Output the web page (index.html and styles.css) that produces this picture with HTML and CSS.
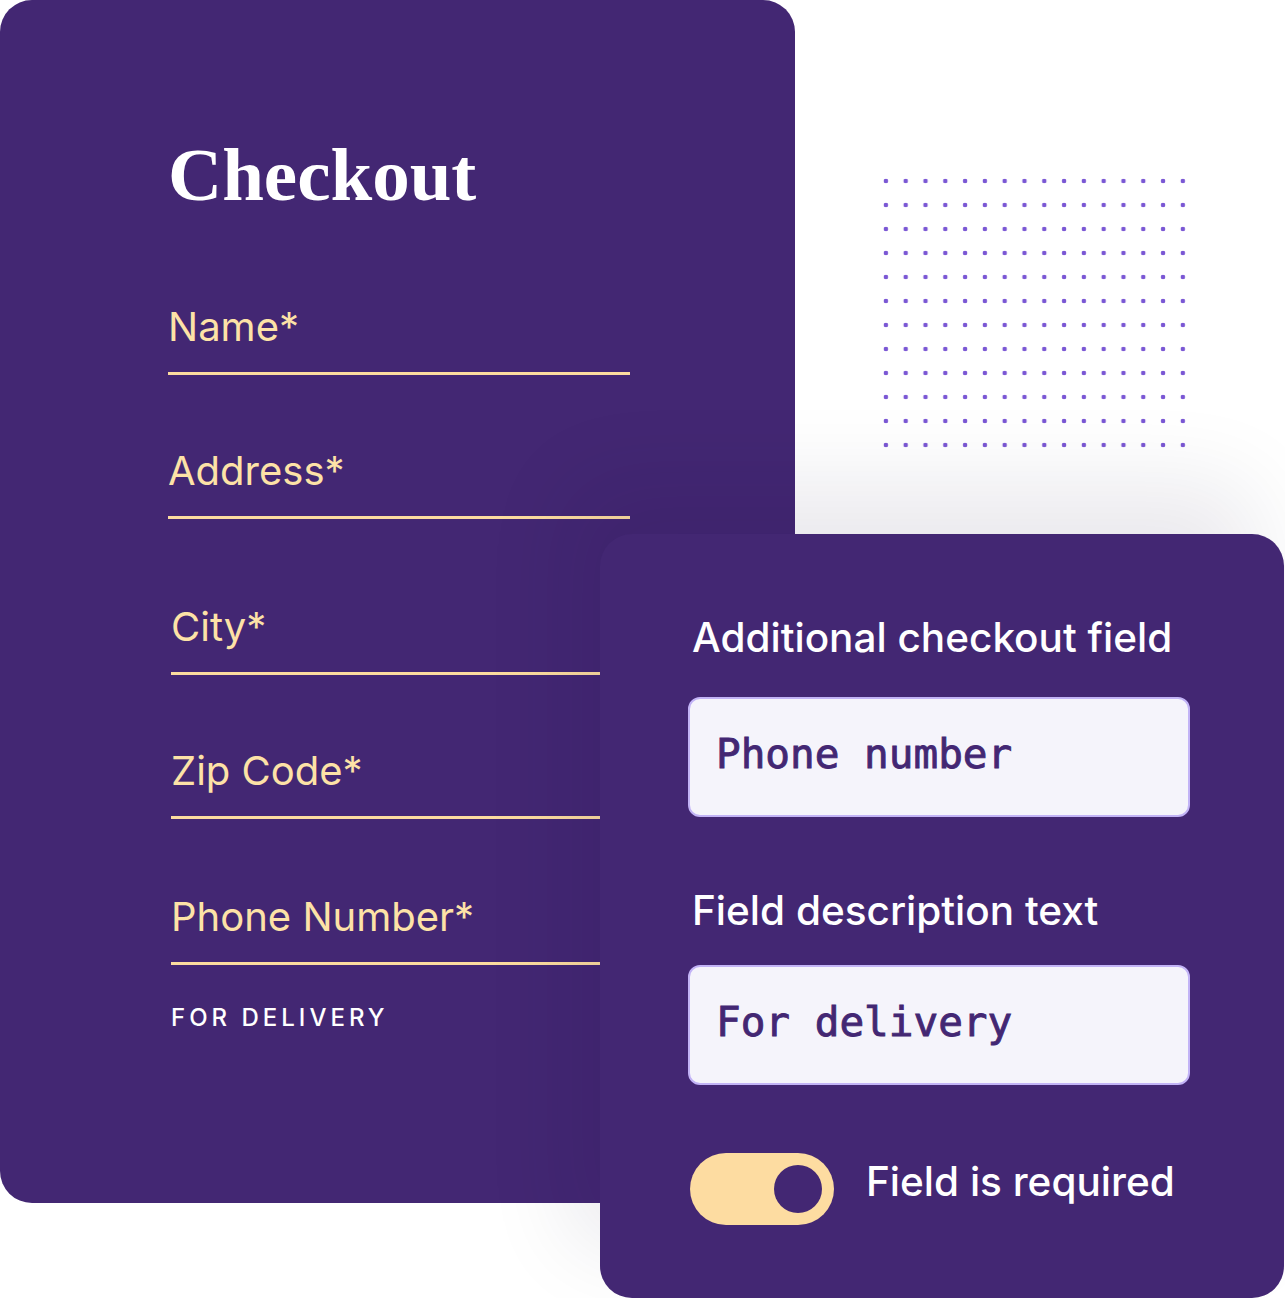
FILE: index.html
```html
<!DOCTYPE html>
<html lang="en">
<head>
    <meta charset="UTF-8">
    <meta name="viewport" content="width=device-width, initial-scale=1.0">
    <title>Checkout Fields</title>
    <link rel="stylesheet" href="styles.css">
</head>
<body>
    <div class="stage">
        <section class="checkout">
            <h1 class="checkout-title">Checkout</h1>

            <div class="field-group">
                <div class="field"><span class="field-label">Name*</span></div>
                <div class="field"><span class="field-label">Address*</span></div>
            </div>

            <div class="field-group field-group--lower">
                <div class="field"><span class="field-label">City*</span></div>
                <div class="field"><span class="field-label">Zip Code*</span></div>
                <div class="field field--phone"><span class="field-label">Phone Number*</span></div>
                <p class="field-hint">For delivery</p>
            </div>
        </section>

        <div class="dots"></div>

        <section class="editor">
            <h2 class="editor-label">Additional checkout field</h2>
            <div class="editor-input">Phone number</div>

            <h2 class="editor-label editor-label--desc">Field description text</h2>
            <div class="editor-input">For delivery</div>

            <div class="toggle-row">
                <span class="toggle"><span class="toggle-knob"></span></span>
                <span class="toggle-text">Field is required</span>
            </div>
        </section>
    </div>
</body>
</html>
```

FILE: styles.css
```css
body {
    margin: 0;
    background: #ffffff;
    font-family: Inter, "Noto Sans", sans-serif;
}
.stage {
    position: relative;
    width: 1285px;
    height: 1298px;
    overflow: hidden;
}

/* left card: the checkout form preview */
.checkout {
    width: 795px;
    height: 1203px;
    box-sizing: border-box;
    padding: 137px 0 0 168px;
    background: #432773;
    border-radius: 32px;
}
.checkout-title {
    margin: 0 0 91px 0;
    font-family: "Liberation Serif", "DejaVu Serif", serif;
    font-size: 75px;
    font-weight: bold;
    line-height: 1;
    color: #ffffff;
}
.field-group {
    display: flex;
    flex-direction: column;
    gap: 72px;
}
.field-group--lower {
    margin: 84px 0 0 3px;
}
.field {
    width: 462px;
    padding-bottom: 21px;
    border-bottom: 3px solid #fcdc9f;
}
.field--phone {
    margin-top: 2px;
}
.field-label {
    display: block;
    font-size: 40px;
    line-height: 48px;
    font-weight: 400;
    color: #fde2a7;
}
.field-hint {
    margin: -33px 0 0 0;
    font-size: 24px;
    line-height: 28px;
    font-weight: 500;
    letter-spacing: 4px;
    text-transform: uppercase;
    color: #ffffff;
}

/* dotted decoration behind the cards */
.dots {
    position: absolute;
    left: 876px;
    top: 169px;
    width: 317px;
    height: 288px;
    background-image: radial-gradient(circle, #7a57d4 2px, transparent 2.6px);
    background-size: 19.8px 24px;
}

/* right card: field settings, sits over the form */
.editor {
    position: absolute;
    left: 600px;
    top: 534px;
    width: 684px;
    height: 764px;
    box-sizing: border-box;
    padding: 80px 0 0 88px;
    background: #432773;
    border-radius: 32px;
    box-shadow: -30px -50px 90px rgba(25, 12, 60, 0.09);
}
.editor-label {
    margin: 0 0 35px 4px;
    font-size: 40.5px;
    line-height: 48px;
    font-weight: 500;
    color: #ffffff;
}
.editor-label--desc {
    margin: 70px 0 30px 4px;
}
.editor-input {
    width: 502px;
    height: 120px;
    box-sizing: border-box;
    padding: 31px 0 0 26px;
    border: 2px solid #c2b3f6;
    border-radius: 12px;
    background: #f5f4fb;
    font-family: "DejaVu Sans Mono", "Liberation Mono", monospace;
    font-size: 41px;
    line-height: 48px;
    font-weight: normal;
    -webkit-text-stroke: 0.9px #432773;
    color: #432773;
}
.toggle-row {
    display: flex;
    align-items: center;
    gap: 32px;
    margin: 68px 0 0 2px;
}
.toggle {
    display: flex;
    align-items: center;
    justify-content: flex-end;
    width: 144px;
    height: 72px;
    box-sizing: border-box;
    padding-right: 12px;
    border-radius: 36px;
    background: #fddca1;
}
.toggle-knob {
    width: 48px;
    height: 48px;
    border-radius: 50%;
    background: #432773;
}
.toggle-text {
    margin-bottom: 14px;
    font-size: 40.5px;
    line-height: 48px;
    font-weight: 500;
    color: #ffffff;
}
```
